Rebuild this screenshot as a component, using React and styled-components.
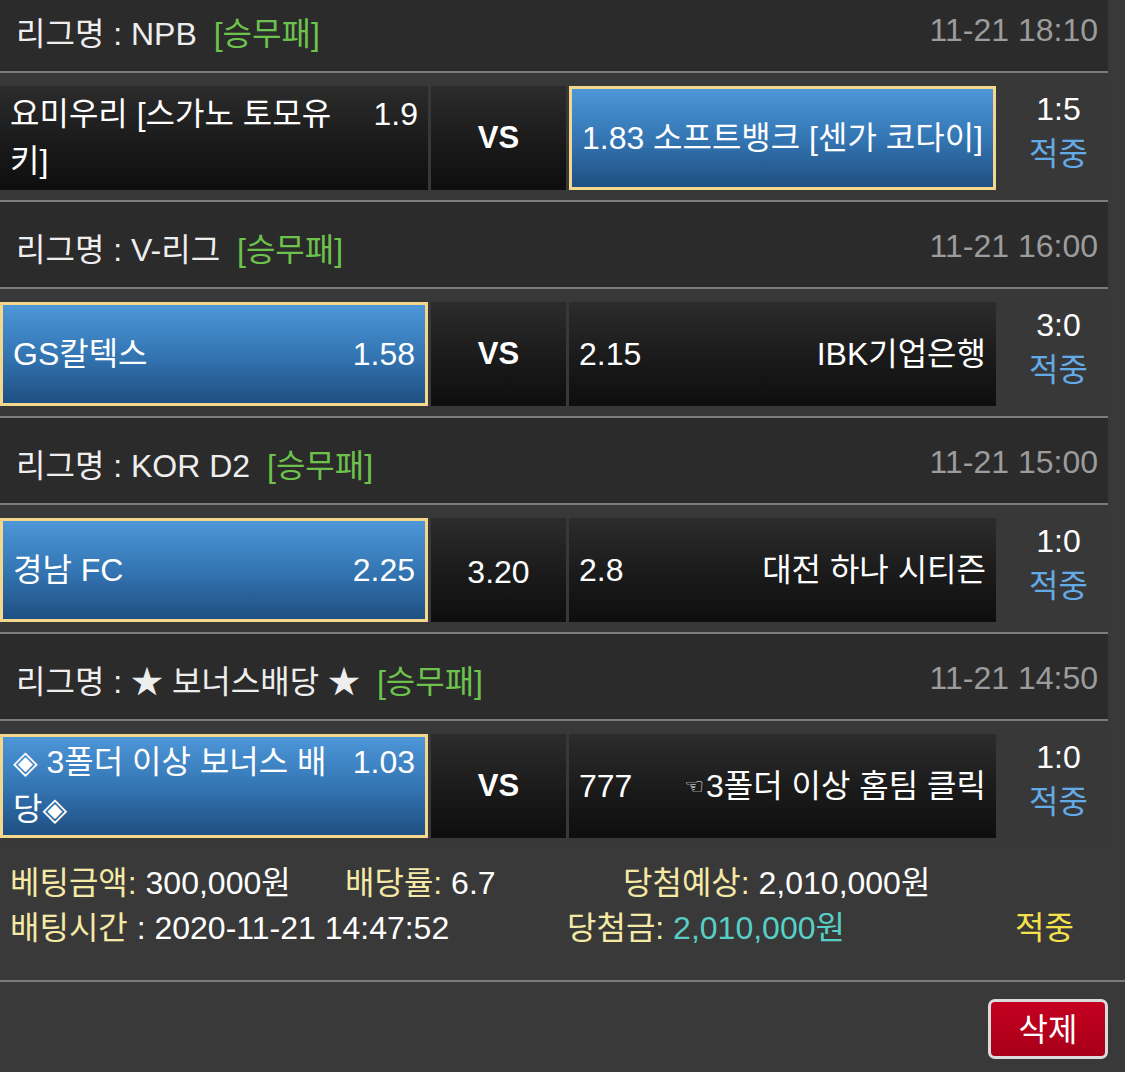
import React from "react";
import styled, { createGlobalStyle, css } from "styled-components";

const GlobalStyle = createGlobalStyle`
  html, body {
    margin: 0;
    padding: 0;
    background: #393939;
  }
  body {
    font-family: "Liberation Sans", "Noto Sans CJK KR", "DejaVu Sans", sans-serif;
    color: #ffffff;
    overflow: hidden;
  }
  * { box-sizing: border-box; }
`;

const Page = styled.div`
  width: 1125px;
  min-height: 1072px;
  background: #393939;
  font-size: 32px;
  overflow: hidden;
`;

const List = styled.div`
  width: 1108px;
  margin-top: -14px;
`;

const LeagueHeader = styled.div`
  height: 87px;
  background: #2b2b2b;
  border-bottom: 2px solid #7c7c7c;
  display: flex;
  align-items: center;
  justify-content: space-between;
  padding: 4px 10px 0 16px;
`;

const LeagueName = styled.div`
  color: #eeeeee;
`;

const BetType = styled.span`
  color: #6cc24c;
  margin-left: 8px;
`;

const MatchTime = styled.div`
  color: #9c9c9c;
`;

const MatchRow = styled.div`
  display: flex;
  align-items: stretch;
  gap: 3px;
  padding: 13px 0 10px;
  background: #383838;
  ${(p) =>
    !p.$last &&
    css`
      border-bottom: 2px solid #7c7c7c;
    `}
`;

const Cell = styled.div`
  height: 104px;
  display: flex;
  align-items: center;
  padding: 0 10px;
  width: ${(p) => p.$w}px;
  flex-shrink: 0;
  background: linear-gradient(to bottom, #2c2c2c 0%, #1a1a1a 55%, #0e0e0e 100%);
  ${(p) =>
    p.$picked &&
    css`
      border: 3px solid #f2d78c;
      background: linear-gradient(to bottom, #4d96d8 0%, #3476b4 50%, #1e4f82 100%);
    `}
`;

const CellInner = styled.div`
  display: flex;
  align-items: flex-start;
  justify-content: space-between;
  width: 100%;
  line-height: 47px;
`;

const HomeName = styled.div`
  flex: 0 1 330px;
`;

const AwayName = styled.div`
  flex: 1;
  text-align: right;
  padding-left: 4px;
`;

const Hand = styled.span`
  font-family: "DejaVu Sans", sans-serif;
  font-size: 22px;
  vertical-align: 3px;
  margin-right: 2px;
`;

const Odds = styled.div`
  flex-shrink: 0;
`;

const MidCell = styled(Cell)`
  justify-content: center;
  font-weight: ${(p) => (p.$bold ? 700 : 400)};
  font-size: ${(p) => (p.$bold ? 31 : 32)}px;
  padding-top: ${(p) => (p.$bold ? 0 : 4)}px;
`;

const Result = styled.div`
  flex: 1;
  display: flex;
  flex-direction: column;
  align-items: center;
  justify-content: center;
  line-height: 45px;
  padding: 0 0 12px 10px;
`;

const Score = styled.div`
  color: #ffffff;
`;

const Hit = styled.div`
  color: #64aae6;
`;

const Summary = styled.div`
  padding: 13px 10px 29px;
  line-height: 45px;
  border-bottom: 2px solid #7c7c7c;
`;

const SummaryLine = styled.div`
  display: flex;
  white-space: nowrap;
`;

const SummaryItem = styled.div`
  width: ${(p) => (p.$w ? `${p.$w}px` : "auto")};
  flex-shrink: 0;
`;

const Label = styled.span`
  color: #f4eaa6;
`;

const Value = styled.span`
  color: ${(p) => p.$color || "#ffffff"};
`;

const Status = styled.span`
  color: #f5e14e;
`;

const Actions = styled.div`
  display: flex;
  justify-content: flex-end;
  padding: 17px 17px 13px;
`;

const DeleteButton = styled.button`
  width: 120px;
  height: 60px;
  border: 3px solid #dcdcdc;
  border-radius: 7px;
  background: linear-gradient(to bottom, #c4001f 0%, #a80019 100%);
  color: #ffffff;
  font-family: inherit;
  font-size: 32px;
  padding: 0 0 4px;
  cursor: pointer;
`;

const games = [
  {
    league: "NPB",
    time: "11-21 18:10",
    home: { name: "요미우리 [스가노 토모유키]", odds: "1.9" },
    mid: "VS",
    away: { name: "소프트뱅크 [센가 코다이]", odds: "1.83" },
    pick: "away",
    score: "1:5",
  },
  {
    league: "V-리그",
    time: "11-21 16:00",
    home: { name: "GS칼텍스", odds: "1.58" },
    mid: "VS",
    away: { name: "IBK기업은행", odds: "2.15" },
    pick: "home",
    score: "3:0",
  },
  {
    league: "KOR D2",
    time: "11-21 15:00",
    home: { name: "경남 FC", odds: "2.25" },
    mid: "3.20",
    away: { name: "대전 하나 시티즌", odds: "2.8" },
    pick: "home",
    score: "1:0",
  },
  {
    league: "★ 보너스배당 ★",
    time: "11-21 14:50",
    home: { name: "◈ 3폴더 이상 보너스 배당◈", odds: "1.03" },
    mid: "VS",
    away: { hand: "☜", name: "3폴더 이상 홈팀 클릭", odds: "777" },
    pick: "home",
    score: "1:0",
  },
];

export default function App() {
  return (
    <Page>
      <GlobalStyle />
      <List>
        {games.map((g, i) => (
          <React.Fragment key={g.time}>
            <LeagueHeader>
              <LeagueName>
                리그명 : {g.league} <BetType>[승무패]</BetType>
              </LeagueName>
              <MatchTime>{g.time}</MatchTime>
            </LeagueHeader>
            <MatchRow $last={i === games.length - 1}>
              <Cell $w={428} $picked={g.pick === "home"}>
                <CellInner>
                  <HomeName>{g.home.name}</HomeName>
                  <Odds>{g.home.odds}</Odds>
                </CellInner>
              </Cell>
              <MidCell $w={135} $bold={g.mid === "VS"}>
                {g.mid}
              </MidCell>
              <Cell $w={427} $picked={g.pick === "away"}>
                <CellInner>
                  <Odds>{g.away.odds}</Odds>
                  <AwayName>
                    {g.away.hand && <Hand>{g.away.hand}</Hand>}
                    {g.away.name}
                  </AwayName>
                </CellInner>
              </Cell>
              <Result>
                <Score>{g.score}</Score>
                <Hit>적중</Hit>
              </Result>
            </MatchRow>
          </React.Fragment>
        ))}
      </List>
      <Summary>
        <SummaryLine>
          <SummaryItem $w={335}>
            <Label>베팅금액:</Label> <Value>300,000원</Value>
          </SummaryItem>
          <SummaryItem $w={278}>
            <Label>배당률:</Label> <Value>6.7</Value>
          </SummaryItem>
          <SummaryItem>
            <Label>당첨예상:</Label> <Value>2,010,000원</Value>
          </SummaryItem>
        </SummaryLine>
        <SummaryLine>
          <SummaryItem $w={557}>
            <Label>배팅시간</Label> <Value>: 2020-11-21 14:47:52</Value>
          </SummaryItem>
          <SummaryItem $w={448}>
            <Label>당첨금:</Label> <Value $color="#58cfc6">2,010,000원</Value>
          </SummaryItem>
          <SummaryItem>
            <Status>적중</Status>
          </SummaryItem>
        </SummaryLine>
      </Summary>
      <Actions>
        <DeleteButton type="button">삭제</DeleteButton>
      </Actions>
    </Page>
  );
}
